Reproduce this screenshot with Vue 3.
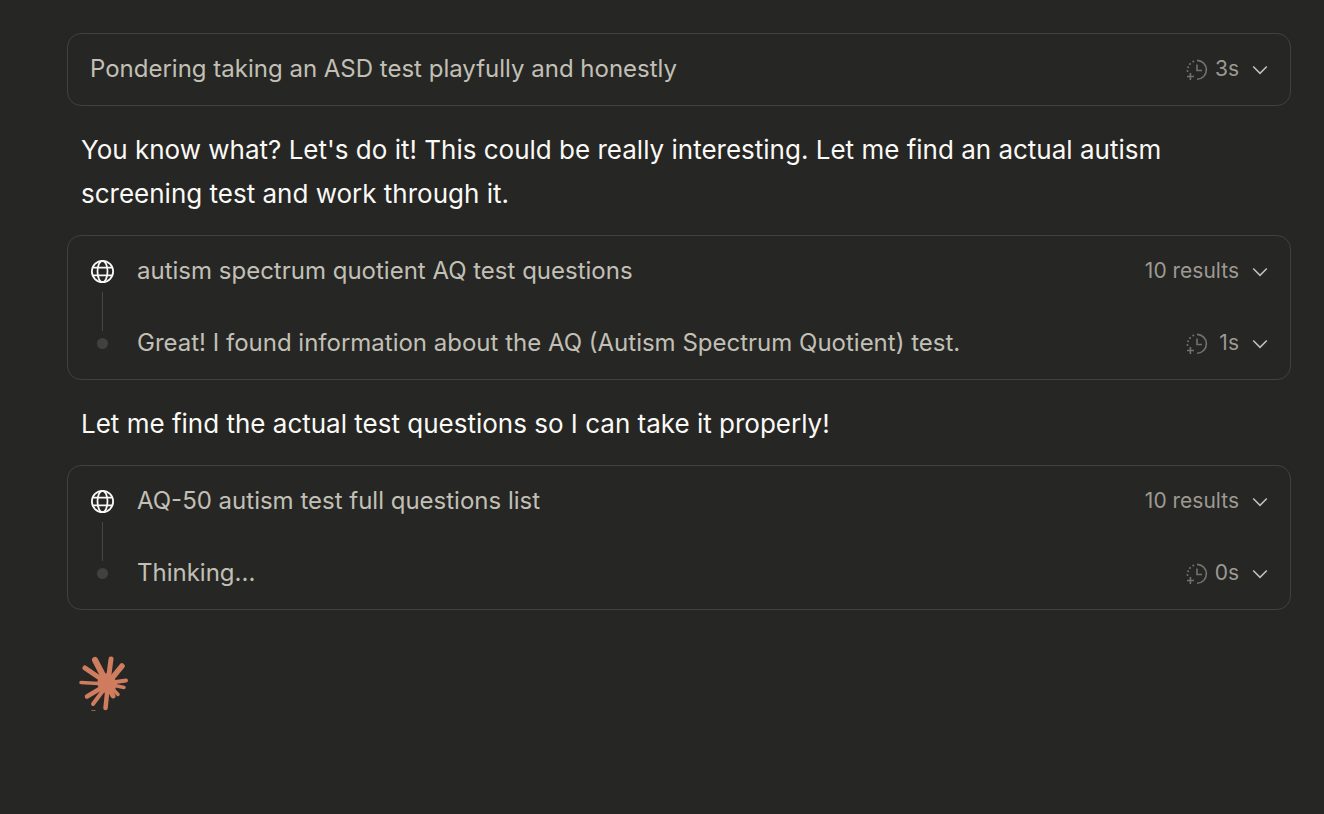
<script setup>
const thread = [
  { type: 'steps', rows: [{ label: 'Pondering taking an ASD test playfully and honestly', meta: '3s', timed: true }] },
  { type: 'text', text: "You know what? Let's do it! This could be really interesting. Let me find an actual autism screening test and work through it." },
  { type: 'steps', rows: [
    { label: 'autism spectrum quotient AQ test questions', meta: '10 results', icon: 'globe' },
    { label: 'Great! I found information about the AQ (Autism Spectrum Quotient) test.', meta: '1s', timed: true, icon: 'dot' },
  ] },
  { type: 'text', text: 'Let me find the actual test questions so I can take it properly!' },
  { type: 'steps', rows: [
    { label: 'AQ-50 autism test full questions list', meta: '10 results', icon: 'globe' },
    { label: 'Thinking...', meta: '0s', timed: true, icon: 'dot' },
  ] },
]
</script>

<template>
  <main class="thread">
    <template v-for="(block, i) in thread" :key="i">
      <p v-if="block.type === 'text'" class="message">{{ block.text }}</p>
      <section v-else class="card">
        <button v-for="row in block.rows" :key="row.label" type="button" class="row">
          <span v-if="row.icon" class="rail" :class="row.icon">
            <svg v-if="row.icon === 'globe'" class="globe" viewBox="0 0 24 24" aria-hidden="true">
              <circle cx="12" cy="12" r="10.2" />
              <ellipse cx="12" cy="12" rx="4.8" ry="10.2" />
              <path d="M2.4 8.3h19.2M2.4 15.7h19.2" />
            </svg>
            <span v-else class="bullet"></span>
          </span>
          <span class="label">{{ row.label }}</span>
          <span class="meta">
            <svg v-if="row.timed" class="clock" viewBox="0 0 22 22" aria-hidden="true">
              <path d="M11 1.4a9.4 9.4 0 0 1 0 18.8M11 5.5v6h5M4.4 14v7M1 17.5h7" />
              <g class="dots">
                <circle cx="7.3" cy="2.5" r="1" />
                <circle cx="4" cy="5" r="1" />
                <circle cx="2.1" cy="8.3" r="1" />
                <circle cx="1.5" cy="12" r="1" />
              </g>
            </svg>
            <span class="value">{{ row.meta }}</span>
          </span>
          <svg class="chevron" viewBox="0 0 16 10" aria-hidden="true"><path d="M1.2 1.5 8 8.3l6.8-6.8" /></svg>
        </button>
      </section>
    </template>
    <svg class="spark" viewBox="0 0 50 56" role="img" aria-label="Working">
      <path class="core" d="M20 20 28 17 35 21 38 28 36 34 32 38 26 37 20 33 18 27Z" />
      <g class="rays">
        <path d="M28 27 16 4" stroke-width="6" />
        <path d="M29 26 32 3" stroke-width="5" />
        <path d="M29 27 43 10" stroke-width="5.5" />
        <path d="M29 27 47 24.500" stroke-width="4" />
        <path d="M29 28 45 31.500" stroke-width="3.500" />
        <path d="M28 27 39 38.500" stroke-width="3.500" />
        <path d="M28 28 34 40" stroke-width="5" />
        <path d="M29 28 26.500 52" stroke-width="4.500" />
        <path d="M29 28 14 48" stroke-width="4" />
        <path d="M29 28 8 40.500" stroke-width="4.500" />
        <path d="M28 28 2 26.500" stroke-width="3.500" />
        <path d="M28 27 6 12" stroke-width="5" />
      </g>
      <path class="core" d="M12.500 54.300h4v.7h-4z" />
    </svg>
  </main>
</template>

<style>
html {
  background: #262624;
}
body {
  margin: 0;
}
</style>

<style scoped>
.thread {
  padding: 33px 33px 48px 67px;
  color: #faf9f5;
  font-family: Inter, "Liberation Sans", sans-serif;
}
.card {
  display: grid;
  row-gap: 1px;
  border: 1px solid #41413e;
  border-radius: 14px;
}
.row {
  display: flex;
  align-items: center;
  box-sizing: border-box;
  width: 100%;
  height: 71px;
  padding: 0 22px;
  border: 0;
  background: none;
  color: #c2c0b6;
  font: 24px/32px Inter, "Liberation Sans", sans-serif;
  text-align: left;
  cursor: pointer;
}
.rail {
  position: relative;
  display: flex;
  flex: none;
  align-items: center;
  justify-content: center;
  width: 25px;
  height: 71px;
  margin-right: 22px;
}
.rail.globe::after {
  content: "";
  position: absolute;
  top: 56px;
  left: 12px;
  width: 1px;
  height: 39px;
  background: #474744;
}
svg.globe {
  width: 25px;
  height: 25px;
  fill: none;
  stroke: #faf9f5;
  stroke-width: 1.7;
}
.bullet {
  width: 11px;
  height: 11px;
  border-radius: 50%;
  background: #41413e;
}
.label {
  flex: 1;
  min-width: 0;
}
.label,
.value {
  padding-bottom: 2px;
}
.meta {
  display: flex;
  align-items: center;
  gap: 7px;
  color: #9c9a92;
  font-size: 21px;
}
.value {
  min-width: 24px;
  text-align: right;
}
.clock {
  width: 22px;
  height: 22px;
  fill: none;
  stroke: #73726c;
  stroke-width: 1.6;
}
.dots {
  fill: #73726c;
  stroke: none;
}
.chevron {
  width: 16px;
  height: 10px;
  margin-left: 13px;
  fill: none;
  stroke: #c2c0b6;
  stroke-width: 1.6;
}
.message {
  margin: 22px 120px 19px 14px;
  font-size: 26px;
  line-height: 44px;
}
.spark {
  display: block;
  width: 50px;
  height: 56px;
  margin: 46px 0 0 12px;
}
.core {
  fill: #d07c5f;
}
.rays {
  fill: none;
  stroke: #d07c5f;
  stroke-linecap: round;
}
</style>
